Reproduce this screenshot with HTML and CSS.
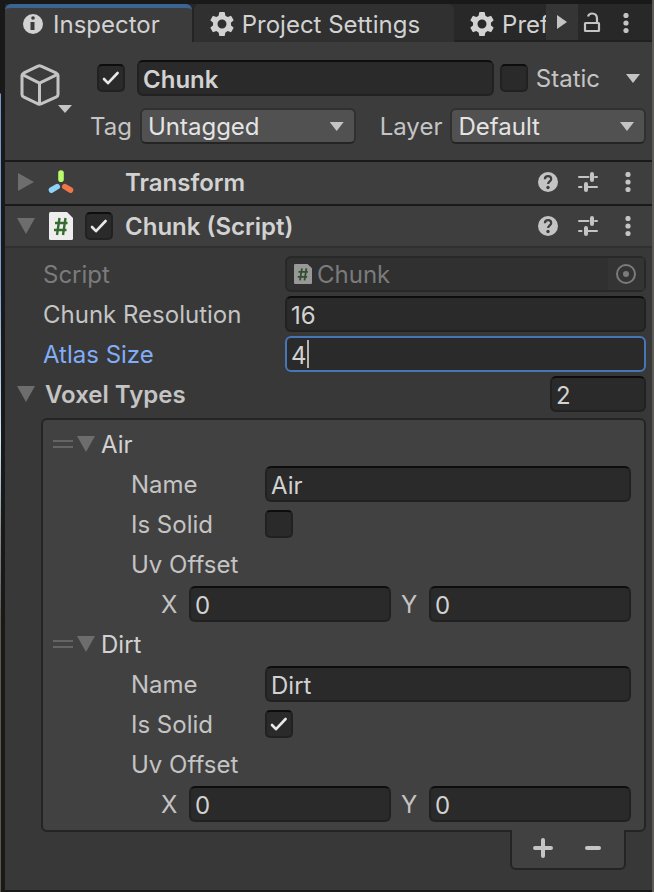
FILE: index.html
```html
<!DOCTYPE html>
<html lang="en">
<head>
<meta charset="utf-8">
<title>Inspector</title>
<link rel="stylesheet" href="styles.css">
</head>
<body>
<svg class="defs" aria-hidden="true">
  <symbol id="gear" viewBox="0 0 24 24">
    <circle cx="12" cy="12" r="6.8" fill="none" stroke="currentColor" stroke-width="4.6"/>
    <path id="cog" fill="currentColor" d="M9.2 0.6Q9.3 0 10 0h4q.7 0 .8.6L15.600 5H8.400z"/>
    <use href="#cog" transform="rotate(60 12 12)"/>
    <use href="#cog" transform="rotate(120 12 12)"/>
    <use href="#cog" transform="rotate(180 12 12)"/>
    <use href="#cog" transform="rotate(240 12 12)"/>
    <use href="#cog" transform="rotate(300 12 12)"/>
  </symbol>
  <symbol id="check" viewBox="0 0 28 28">
    <path d="M7 15l4 4.200L20.600 9" fill="none" stroke="#e8e8e8" stroke-width="2.600" stroke-linecap="round" stroke-linejoin="round"/>
  </symbol>
  <symbol id="help" viewBox="0 0 20 20">
    <circle cx="10" cy="10" r="10" fill="currentColor"/>
    <path d="M6.900 7.300C6.900 5.300 8.200 4.200 10.100 4.200s3.100 1.100 3.100 2.800c0 2.300-3.100 2.500-3.100 5" fill="none" stroke="#3e3e3e" stroke-width="2.200"/>
    <circle cx="10" cy="15.500" r="1.700" fill="#3e3e3e"/>
  </symbol>
  <symbol id="preset" viewBox="0 0 20 20">
    <path d="M1 5h9.500M17 5h2M1 15h2.500M10 15h9" fill="none" stroke="currentColor" stroke-width="2" stroke-linecap="round"/>
    <path d="M14 2v6M8 12v6" fill="none" stroke="currentColor" stroke-width="4" stroke-linecap="round"/>
  </symbol>
  <symbol id="kebab" viewBox="0 0 6 20">
    <g fill="currentColor"><circle cx="3" cy="2.500" r="2.600"/><circle cx="3" cy="10" r="2.600"/><circle cx="3" cy="17.500" r="2.600"/></g>
  </symbol>
  <symbol id="script" viewBox="0 0 24 28">
    <path d="M1.500 0H18l6 6v20.500q0 1.500-1.500 1.500h-21Q0 28 0 26.500v-25Q0 0 1.500 0z" fill="#eee"/>
    <path d="M10.500 6L8 23M16.500 6L14 23M6 11h12.500M5 18h12.500" fill="none" stroke="#356a30" stroke-width="2.400"/>
  </symbol>
  <symbol id="open" viewBox="0 0 18 16"><path d="M0 0h18L9 16z" fill="#6d6d6d"/></symbol>
</svg>

<main class="inspector">
  <nav class="tabs">
    <button class="tab tab-active">
      <svg width="20" height="20" viewBox="0 0 20 20"><circle cx="10" cy="10" r="10" fill="currentColor"/><circle cx="10" cy="4" r="1.800" fill="#3c3c3c"/><path d="M7.500 8h4v8h-4z" fill="#3c3c3c"/></svg>
      <span>Inspector</span>
    </button>
    <button class="tab tab-project"><svg width="24" height="24"><use href="#gear"/></svg><span>Project Settings</span></button>
    <button class="tab tab-pref"><svg width="24" height="24"><use href="#gear"/></svg><span>Pref</span></button>
    <div class="tab-tools">
      <button class="next" aria-label="Next tabs"><svg width="10" height="14" viewBox="0 0 10 14"><path d="M0 0l10 7-10 7z" fill="currentColor"/></svg></button>
      <button class="lock" aria-label="Lock"><svg width="18" height="22" viewBox="0 0 18 22"><rect x="2" y="11" width="14" height="8" rx=".5" fill="none" stroke="currentColor" stroke-width="2.200"/><path d="M5 4.500Q6 1.500 9 1.500q5 0 5 5V11" fill="none" stroke="currentColor" stroke-width="2.200"/></svg></button>
      <button class="menu" aria-label="Menu"><svg width="6" height="20"><use href="#kebab"/></svg></button>
    </div>
  </nav>

  <header class="object">
    <button class="object-icon" aria-label="Object icon">
      <svg width="54" height="52" viewBox="0 0 54 52"><g fill="none" stroke="currentColor" stroke-width="3" stroke-linejoin="round"><path d="M18 2.200q1.500-.8 3 0l15.500 7q1.500.8 1.500 2.400V30.500q0 1.500-1.500 2.300L21 39.800q-1.500.7-3 0L3.500 32.800Q2 32 2 30.500V11.600Q2 10 3.500 9.200z"/><path d="M2.500 10.700L19.500 19.200l17.500-8.500M19.500 19.200v20.500"/></g><path d="M38 41h14l-7 8z" fill="currentColor"/></svg>
    </button>
    <div class="object-rows">
      <div class="object-row">
        <span class="box"><input type="checkbox" checked aria-label="Active"><svg><use href="#check"/></svg></span>
        <input class="field field-name" type="text" value="Chunk" aria-label="Object name">
        <span class="box"><input type="checkbox" id="static"><svg><use href="#check"/></svg></span>
        <label class="static-label" for="static">Static</label>
        <button class="static-menu" aria-label="Static flags"><svg width="14" height="9" viewBox="0 0 14 9"><path d="M0 0h14L7 9z" fill="currentColor"/></svg></button>
      </div>
      <div class="object-row object-tags">
        <label for="tag">Tag</label>
        <span class="drop drop-tag"><select id="tag"><option>Untagged</option></select></span>
        <label class="layer-label" for="layer">Layer</label>
        <span class="drop drop-layer"><select id="layer"><option>Default</option></select></span>
      </div>
    </div>
  </header>

  <section class="component">
    <div class="bar bar-transform">
      <button class="fold" aria-label="Expand"><svg width="16" height="18" viewBox="0 0 16 18"><path d="M0 0l16 9-16 9z" fill="#6d6d6d"/></svg></button>
      <svg class="bar-icon" width="28" height="26" viewBox="0 0 28 26"><g fill="none" stroke-width="5.600" stroke-linecap="round"><path d="M14 4v6.200" stroke="#b9fb6b"/><path d="M4.500 21l5.700-3.300" stroke="#8fd3f8"/><path d="M17.800 17.700L23.500 21" stroke="#ee7648"/></g></svg>
      <h2>Transform</h2>
      <div class="bar-tools">
        <button aria-label="Help"><svg width="20" height="20"><use href="#help"/></svg></button>
        <button aria-label="Presets"><svg width="20" height="20"><use href="#preset"/></svg></button>
        <button aria-label="More"><svg width="6" height="20"><use href="#kebab"/></svg></button>
      </div>
    </div>
  </section>

  <section class="component">
    <div class="bar bar-script">
      <button class="fold" aria-label="Collapse"><svg width="18" height="16"><use href="#open"/></svg></button>
      <svg class="bar-icon" width="24" height="28"><use href="#script"/></svg>
      <span class="box"><input type="checkbox" checked aria-label="Enabled"><svg><use href="#check"/></svg></span>
      <h2>Chunk (Script)</h2>
      <div class="bar-tools">
        <button aria-label="Help"><svg width="20" height="20"><use href="#help"/></svg></button>
        <button aria-label="Presets"><svg width="20" height="20"><use href="#preset"/></svg></button>
        <button aria-label="More"><svg width="6" height="20"><use href="#kebab"/></svg></button>
      </div>
    </div>

    <div class="props">
      <div class="prop prop-disabled">
        <span class="prop-label">Script</span>
        <div class="field object-field">
          <svg class="file" width="18" height="20" viewBox="0 0 24 28" preserveAspectRatio="none"><use href="#script"/></svg>
          <span>Chunk</span>
          <button class="picker" disabled aria-label="Select script"><svg width="20" height="20" viewBox="0 0 20 20"><circle cx="10" cy="10" r="9" fill="none" stroke="currentColor" stroke-width="2"/><circle cx="10" cy="10" r="3" fill="currentColor"/></svg></button>
        </div>
      </div>
      <div class="prop">
        <label class="prop-label" for="resolution">Chunk Resolution</label>
        <input class="field" id="resolution" type="text" value="16">
      </div>
      <div class="prop prop-focus">
        <label class="prop-label" for="atlas">Atlas Size</label>
        <div class="editing"><input class="field" id="atlas" type="text" value="4"><i class="caret"></i></div>
      </div>
      <div class="array">
        <button class="fold" aria-label="Collapse"><svg width="18" height="16"><use href="#open"/></svg></button>
        <label for="count">Voxel Types</label>
        <input class="field" id="count" type="text" value="2">
      </div>

      <div class="list">
        <div class="item">
          <div class="item-head"><svg class="grip" width="20" height="10" viewBox="0 0 20 10"><path d="M0 2h20M0 8h20" stroke="#646464" stroke-width="2"/></svg><button class="fold" aria-label="Collapse"><svg width="18" height="16"><use href="#open"/></svg></button><span class="item-text">Air</span></div>
          <div class="item-row"><label for="name0">Name</label><input class="field" id="name0" type="text" value="Air"></div>
          <div class="item-row"><label for="solid0">Is Solid</label><span class="box"><input type="checkbox" id="solid0"><svg><use href="#check"/></svg></span></div>
          <div class="item-row"><span class="item-text">Uv Offset</span></div>
          <div class="vector"><label for="x0">X</label><input class="field" id="x0" type="text" value="0"><label class="axis-y" for="y0">Y</label><input class="field" id="y0" type="text" value="0"></div>
        </div>
        <div class="item">
          <div class="item-head"><svg class="grip" width="20" height="10" viewBox="0 0 20 10"><path d="M0 2h20M0 8h20" stroke="#646464" stroke-width="2"/></svg><button class="fold" aria-label="Collapse"><svg width="18" height="16"><use href="#open"/></svg></button><span class="item-text">Dirt</span></div>
          <div class="item-row"><label for="name1">Name</label><input class="field" id="name1" type="text" value="Dirt"></div>
          <div class="item-row"><label for="solid1">Is Solid</label><span class="box"><input type="checkbox" id="solid1" checked><svg><use href="#check"/></svg></span></div>
          <div class="item-row"><span class="item-text">Uv Offset</span></div>
          <div class="vector"><label for="x1">X</label><input class="field" id="x1" type="text" value="0"><label class="axis-y" for="y1">Y</label><input class="field" id="y1" type="text" value="0"></div>
        </div>
      </div>
      <div class="list-foot">
        <button aria-label="Add"><svg width="20" height="20" viewBox="0 0 20 20"><path d="M2 10h16M10 2v16" stroke="currentColor" stroke-width="4" stroke-linecap="round"/></svg></button>
        <button aria-label="Remove"><svg width="16" height="4" viewBox="0 0 16 4"><path d="M2 2h12" stroke="currentColor" stroke-width="4" stroke-linecap="round"/></svg></button>
      </div>
    </div>
  </section>
</main>
</body>
</html>
```
FILE: styles.css
```css
* {
  box-sizing: border-box;
}

body {
  margin: 0;
  min-height: 100vh;
  padding: 4px 2px 2px 5px;
  background:
    linear-gradient(#191919 93px, #7a93c8 94px, #7f9ad0 280px, #cfe8f5 440px, #8a8f90 530px, #5f5850 620px) 0 0 / 1px 100% no-repeat,
    #191919;
  box-shadow: inset -2px 0 #5c5b58;
  color: #c4c4c4;
  font: 24px/34px Inter, "Liberation Sans", sans-serif;
  display: flex;
}

.defs {
  position: absolute;
  width: 0;
  height: 0;
}

svg {
  display: block;
  flex: none;
}

button {
  margin: 0;
  padding: 0;
  border: 0;
  background: none;
  color: inherit;
  font: inherit;
  display: flex;
  align-items: center;
  justify-content: center;
}

label,
h2,
.tab span,
.prop-label,
.item-text,
.object-field span {
  padding-top: 2px;
}

.inspector {
  flex: 1;
  min-width: 0;
  background: #383838;
}

/* Tab strip */

.tabs {
  display: flex;
  height: 38px;
  background: #282828;
  box-shadow: inset 0 -2px #202020;
}

.tab {
  flex: none;
  gap: 10px;
  padding: 2px 32px 0 18px;
  justify-content: flex-start;
  color: #d2d2d2;
  white-space: nowrap;
}

.tab-active {
  background: #3c3c3c;
  border-top: 4px solid #3a6492;
  border-radius: 6px 6px 0 0;
  padding-top: 0;
  padding-bottom: 2px;
}

.tab-project {
  gap: 8px;
  padding-right: 34px;
  padding-left: 16px;
  background: #303030;
  border-left: 2px solid #242424;
  border-radius: 6px 6px 0 0;
}

.tab-pref {
  flex: 1 1 0;
  min-width: 0;
  gap: 8px;
  padding-right: 0;
  padding-left: 16px;
  overflow: hidden;
}

.tab-tools {
  flex: none;
  display: flex;
  align-items: center;
  padding-right: 18px;
}

.next {
  width: 32px;
  height: 36px;
  align-self: flex-start;
  background: #353535;
}

.lock {
  margin: 0 17px 0 5px;
}

.menu {
  width: 16px;
}

/* Object header */

.object {
  display: flex;
  padding: 18px 6px 16px 15px;
  background: #3c3c3c;
}

.object-icon {
  align-self: flex-start;
  padding-top: 4px;
}

.object-rows {
  flex: 1;
  min-width: 0;
  display: flex;
  flex-direction: column;
  gap: 12px;
}

.object-row {
  display: flex;
  align-items: center;
  padding-left: 23px;
}

.object-row .field-name {
  flex: 1;
  margin: 0 6px 0 12px;
  font-weight: 600;
}

.static-label {
  margin-left: 8px;
}

.static-menu {
  margin: 0 6px 0 26px;
}

.object-tags {
  gap: 8px;
  padding-left: 16px;
}

.layer-label {
  margin-left: 16px;
}

/* Controls */

.field {
  display: block;
  width: 100%;
  min-width: 0;
  height: 36px;
  margin: 0;
  padding: 2px 4px 0;
  border: 2px solid #212121;
  border-top-color: #0d0d0d;
  border-radius: 6px;
  outline: 0;
  background: #2a2a2a;
  color: #d2d2d2;
  font: inherit;
}

.box {
  position: relative;
  flex: none;
  width: 28px;
  height: 28px;
}

.box input {
  appearance: none;
  display: block;
  width: 28px;
  height: 28px;
  margin: 0;
  border: 2px solid #212121;
  border-top-color: #0d0d0d;
  border-radius: 5px;
  background: #2a2a2a;
}

.box svg {
  position: absolute;
  inset: 0;
  width: 28px;
  height: 28px;
  visibility: hidden;
  pointer-events: none;
}

.box input:checked + svg {
  visibility: visible;
}

.drop {
  position: relative;
  min-width: 0;
}

.drop-tag {
  flex: 214;
}

.drop-layer {
  flex: 194;
}

.drop select {
  appearance: none;
  display: block;
  width: 100%;
  height: 36px;
  margin: 0;
  padding: 0 32px 0 6px;
  border: 2px solid #303030;
  border-bottom-color: #242424;
  border-radius: 6px;
  background: #515151;
  color: #e4e4e4;
  font: inherit;
}

.drop::after {
  content: "";
  position: absolute;
  top: 14px;
  right: 12px;
  width: 14px;
  height: 9px;
  background: #c4c4c4;
  clip-path: polygon(0 0, 100% 0, 50% 100%);
  pointer-events: none;
}

/* Component bars */

.component {
  border-top: 2px solid #1a1a1a;
}

.bar {
  display: flex;
  align-items: center;
  height: 42px;
  padding: 0 21px 0 12px;
  background: #3e3e3e;
}

.bar-transform {
  padding-bottom: 2px;
}

.bar-script {
  border-bottom: 2px solid #303030;
}

.fold {
  flex: none;
  width: 18px;
}

.bar .bar-icon {
  margin: 0 12px 0 14px;
}

.bar-transform .bar-icon {
  margin: 0 50px 0 12px;
}

.bar h2 {
  flex: 1;
  margin: 0;
  font-size: 24px;
  font-weight: 600;
  color: #d2d2d2;
}

.bar .box + h2 {
  margin-left: 12px;
}

.bar-tools {
  display: flex;
  gap: 20px;
}

.bar-tools button:last-child {
  margin-left: 7px;
}

/* Properties */

.props {
  display: flex;
  flex-direction: column;
  gap: 4px;
  padding: 8px 6px 20px 12px;
}

.prop {
  display: grid;
  grid-template-columns: 242px 1fr;
  padding-left: 26px;
}

.prop-disabled {
  color: #7b7b7b;
}

.object-field {
  display: flex;
  align-items: center;
  gap: 5px;
  padding: 0 0 0 7px;
  border-color: #282828;
  background: #303030;
  color: #7b7b7b;
}

.file {
  opacity: 0.55;
}

.picker {
  width: 36px;
  height: 32px;
  margin-left: auto;
  background: #343434;
}

.prop-focus .prop-label {
  color: #81adf6;
}

.prop-focus .field {
  border-color: #4577b8;
}

.editing {
  position: relative;
}

.caret {
  position: absolute;
  top: 4px;
  left: 22px;
  width: 2px;
  height: 28px;
  background: #b4b4b4;
}

.array {
  display: flex;
  align-items: center;
}

.array label {
  flex: 1;
  margin-left: 10px;
  font-weight: 600;
}

.array .field {
  width: 96px;
}

.list {
  display: flex;
  flex-direction: column;
  gap: 4px;
  margin: 2px 0 0 24px;
  padding: 6px 13px 8px 10px;
  border: 2px solid #242424;
  border-radius: 6px;
  background: #414141;
}

.item {
  display: flex;
  flex-direction: column;
  gap: 4px;
}

.item-head {
  display: flex;
  align-items: center;
  color: #d2d2d2;
}

.item-head .fold {
  margin: 0 6px 0 4px;
}

.item-row {
  display: grid;
  grid-template-columns: 134px 1fr;
  align-items: center;
  padding-left: 78px;
}

.vector {
  display: grid;
  grid-template-columns: 28px 1fr 38px 1fr;
  padding-left: 108px;
}

.axis-y {
  margin-left: 10px;
}

.list-foot {
  display: flex;
  align-items: center;
  align-self: flex-end;
  justify-content: space-between;
  width: 116px;
  height: 40px;
  margin: -6px 20px 0 0;
  padding: 0 23px 2px 21px;
  border: 2px solid #242424;
  border-top: 0;
  border-radius: 0 0 6px 6px;
  background: #414141;
}
```
